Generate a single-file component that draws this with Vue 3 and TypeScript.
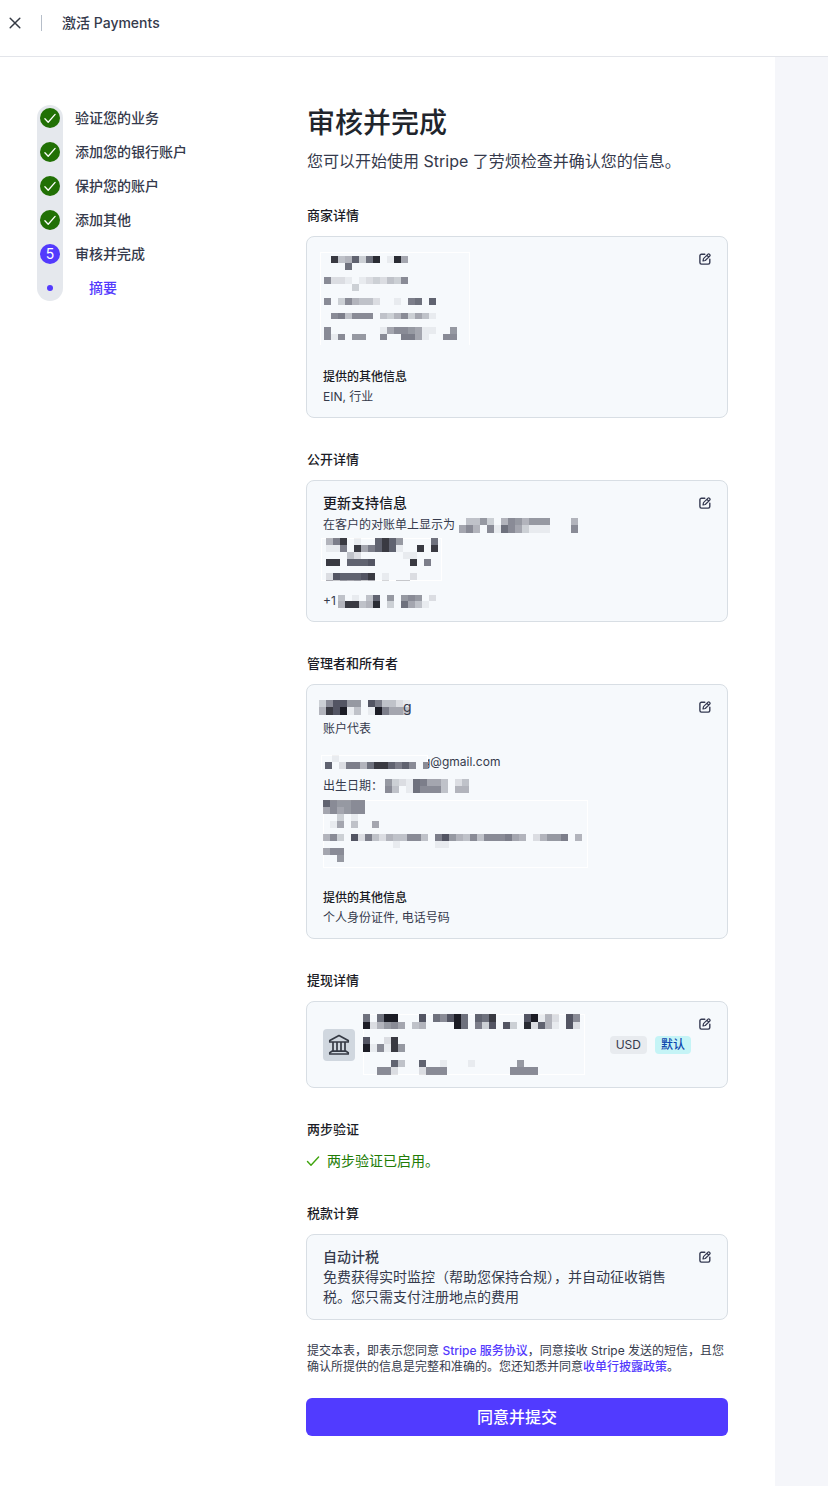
<script setup lang="ts">
import { h, type FunctionalComponent } from 'vue'

/** One strip of redaction tiles: top, height and a hex darkness per 7px tile ('.' is empty). */
type Strip = [number, number, string]

interface Redaction {
  width: number
  height: number
  inset: number
  frame?: 'box' | 'open'
  strips: Strip[]
}

const TILE = 7

const Mosaic: FunctionalComponent<{ data: Redaction }> = ({ data }) => {
  const tiles = data.strips.flatMap(([y, height, shades]) =>
    [...shades].flatMap((shade, i) =>
      shade === '.'
        ? []
        : [
            h('rect', {
              x: data.inset + i * TILE,
              y,
              width: TILE,
              height,
              fill: parseInt(shade, 16) > 12 ? '#0c0d16' : '#1c1e30',
              'fill-opacity': parseInt(shade, 16) / 16,
            }),
          ],
    ),
  )
  const { width: w, height: ht } = data
  const frame = data.frame
    ? h('path', {
        d:
          data.frame === 'box'
            ? `M.5 .5H${w - 0.5}V${ht - 0.5}H.5Z`
            : `M.5 ${ht}V.5H${w - 0.5}V${ht}`,
        fill: 'none',
        stroke: '#fff',
      })
    : null
  return h(
    'svg',
    { width: w, height: ht, viewBox: `0 0 ${w} ${ht}`, 'shape-rendering': 'crispEdges', 'aria-hidden': 'true' },
    [h('rect', { width: w, height: ht, fill: '#f6f9fc' }), frame, ...tiles],
  )
}
Mosaic.props = ['data']

const business: Redaction = {
  width: 150, height: 93, inset: 4, frame: 'open',
  strips: [
    [4, 7, '.d45b3ae.1e6'],
    [11, 7, '...a'],
    [25, 7, '8221.1232438'],
    [32, 7, '....3'],
    [46, 7, '8.3854420.1.9a.b'],
    [61, 6, '.894888.435836410'],
    [75, 7, '8.......16887611..7'],
    [82, 6, '818.77..8..9961..88'],
  ],
}
const statement: Redaction = {
  width: 120, height: 15, inset: 1,
  strips: [
    [0, 7, '.4473.5875777...5'],
    [7, 8, '685.81a863111...8'],
  ],
}
const support: Redaction = {
  width: 121, height: 43, inset: 5, frame: 'box',
  strips: [
    [0, 7, '59d.1..bdb7....a'],
    [7, 7, '119.d69bdb1..d.d'],
    [14, 7, '...42......11'],
    [21, 7, 'dd.bbbc.....d.9'],
    [35, 7, '2cbbbcd.1...2'],
    [42, 1, '6476746.3.44'],
  ],
}
const phone: Redaction = {
  width: 99, height: 13, inset: 0,
  strips: [
    [0, 6, '4.1.4b.7.787.2'],
    [6, 7, '5dd45e.3.a641'],
  ],
}
const owner: Redaction = {
  width: 92, height: 15, inset: 0,
  strips: [
    [0, 7, '38cc77.c94421'],
    [7, 8, '5dcf14.1f9664'],
  ],
}
const email: Redaction = {
  width: 107, height: 15, inset: 4, frame: 'open',
  strips: [
    [0, 7, '.1'],
    [7, 7, 'b.2995addb9b8.8'],
  ],
}
const birth: Redaction = {
  width: 89, height: 15, inset: 1,
  strips: [
    [0, 7, '7321a9664.24'],
    [7, 7, '84.1a8884.55'],
  ],
}
const address: Redaction = {
  width: 265, height: 68, inset: 0, frame: 'box',
  strips: [
    [0, 7, 'b87788'],
    [7, 7, '686788'],
    [14, 7, '..3.1'],
    [21, 7, '.16.4..6'],
    [34, 7, '583.c2942544884.9c75484888965.25779.5'],
    [41, 7, '..........1.....11'],
    [48, 7, '688'],
    [55, 7, '..7'],
  ],
}
const bank: Redaction = {
  width: 222, height: 61, inset: 0, frame: 'box',
  strips: [
    [0, 8, 'a.aff...c.a8cfa.bad....cf152.c8'],
    [8, 7, 'f25786.45....fa.93c.c3.e2b51.c2'],
    [23, 7, 'c..2d'],
    [30, 8, 'f181d7'],
    [46, 7, '....b4..b.01...1......7'],
    [53, 8, '..882...2888.........8888'],
  ],
}

const doneSteps: string[] = ['验证您的业务', '添加您的银行账户', '保护您的账户', '添加其他']

const EditIcon: FunctionalComponent = () =>
  h('svg', { width: 12, height: 12, viewBox: '0 0 12 12', fill: 'none', stroke: '#353a52', 'stroke-width': 1.4, 'aria-hidden': 'true' }, [
    h('path', { d: 'M5.8 1.2H2.4A1.5 1.5 0 0 0 .9 2.7v6.9a1.5 1.5 0 0 0 1.5 1.5h6.9a1.5 1.5 0 0 0 1.5-1.5V6.2', 'stroke-linecap': 'round' }),
    h('path', { d: 'M4 8l.5-2.3L9 1.2a1 1 0 0 1 1.4 0l.4.4a1 1 0 0 1 0 1.4L6.3 7.5 4 8ZM8 2.4l1.6 1.6', 'stroke-linejoin': 'round', 'stroke-width': 1.2 }),
  ])
</script>

<template>
  <div class="page">
    <header class="topbar">
      <button class="close" type="button" aria-label="关闭">
        <svg width="12" height="12" viewBox="0 0 12 12" aria-hidden="true">
          <path d="M1.2 1.2l9.6 9.6M10.8 1.2l-9.6 9.6" fill="none" stroke="#353a44" stroke-width="1.5" stroke-linecap="round" />
        </svg>
      </button>
      <span class="divider"></span>
      <span class="topbar-title">激活 Payments</span>
    </header>

    <div class="body">
      <nav class="sidebar">
        <ol class="steps">
          <li v-for="step in doneSteps" :key="step">
            <span class="dot done">
              <svg width="20" height="20" viewBox="0 0 20 20" aria-hidden="true">
                <path d="M4.9 10.8l3.3 3.4 6.9-7.8" fill="none" stroke="#fff" stroke-width="1.3" stroke-linecap="round" stroke-linejoin="round" />
              </svg>
            </span>
            <span>{{ step }}</span>
          </li>
          <li>
            <span class="dot current">5</span>
            <span>审核并完成</span>
          </li>
          <li class="sub">
            <span class="dot"><i class="bullet"></i></span>
            <span>摘要</span>
          </li>
        </ol>
      </nav>

      <main class="main">
        <h1>审核并完成</h1>
        <p class="lead">您可以开始使用 Stripe 了劳烦检查并确认您的信息。</p>

        <section>
          <h2>商家详情</h2>
          <div class="card compact">
            <div class="info">
              <Mosaic :data="business" class="business" />
              <h4>提供的其他信息</h4>
              <p>EIN, 行业</p>
            </div>
            <button class="edit" type="button" aria-label="编辑商家详情"><EditIcon /></button>
          </div>
        </section>

        <section>
          <h2>公开详情</h2>
          <div class="card compact">
            <div class="info">
              <h3 class="strong">更新支持信息</h3>
              <p class="line">在客户的对账单上显示为<Mosaic :data="statement" class="after" /></p>
              <Mosaic :data="support" class="support" />
              <p class="line phone">+1<Mosaic :data="phone" /></p>
            </div>
            <button class="edit" type="button" aria-label="编辑公开详情"><EditIcon /></button>
          </div>
        </section>

        <section>
          <h2>管理者和所有者</h2>
          <div class="card compact">
            <div class="info">
              <h3 class="line owner"><Mosaic :data="owner" /><span class="tail">g</span></h3>
              <p>账户代表</p>
              <p class="line email"><Mosaic :data="email" class="over" /><span class="tucked">g@gmail.com</span></p>
              <p class="line birth">出生日期：<Mosaic :data="birth" class="near" /></p>
              <Mosaic :data="address" class="address" />
              <h4>提供的其他信息</h4>
              <p>个人身份证件, 电话号码</p>
            </div>
            <button class="edit" type="button" aria-label="编辑管理者和所有者"><EditIcon /></button>
          </div>
        </section>

        <section>
          <h2>提现详情</h2>
          <div class="card payout">
            <div class="info account">
              <span class="bank-icon">
                <svg width="22" height="22" viewBox="0 0 22 22" fill="none" stroke="#353a44" stroke-width="1.7" stroke-linejoin="round" stroke-linecap="round" aria-hidden="true">
                  <path d="M1.8 8V6.6L11 1.6l9.2 5V8ZM1.8 20v-1.4l2.2-1.4h14l2.2 1.4V20ZM5 8v9.2M9 8v9.2M13 8v9.2M17 8v9.2" />
                </svg>
              </span>
              <Mosaic :data="bank" />
              <span class="badges">
                <span class="badge">USD</span>
                <span class="badge default">默认</span>
              </span>
            </div>
            <button class="edit" type="button" aria-label="编辑提现详情"><EditIcon /></button>
          </div>
        </section>

        <section>
          <h2>两步验证</h2>
          <p class="enabled">
            <svg width="14" height="14" viewBox="0 0 14 14" aria-hidden="true">
              <path d="M1.5 7.6l3.5 3.7 7.6-8.2" fill="none" stroke="#3fa40d" stroke-width="1.4" stroke-linecap="round" stroke-linejoin="round" />
            </svg>
            两步验证已启用。
          </p>
        </section>

        <section>
          <h2>税款计算</h2>
          <div class="card">
            <div class="info tax">
              <h3>自动计税</h3>
              <p>免费获得实时监控（帮助您保持合规），并自动征收销售税。您只需支付注册地点的费用</p>
            </div>
            <button class="edit" type="button" aria-label="编辑税款计算"><EditIcon /></button>
          </div>
        </section>

        <p class="legal">提交本表，即表示您同意 <a href="#terms">Stripe 服务协议</a>，同意接收 Stripe 发送的短信，且您确认所提供的信息是完整和准确的。您还知悉并同意<a href="#acquirer">收单行披露政策</a>。</p>
        <button class="submit" type="button">同意并提交</button>
      </main>
      <div class="rail"></div>
    </div>
  </div>
</template>

<style>
body {
  margin: 0;
  background: #fff;
}
</style>

<style scoped>
.page {
  min-height: 100vh;
  display: flex;
  flex-direction: column;
  color: #353a4c;
  font-family: Inter, "Noto Sans CJK SC", sans-serif;
  font-size: 12px;
  line-height: 20px;
}
.page * {
  box-sizing: border-box;
}
h1, h2, h3, h4, p, ol {
  margin: 0;
  padding: 0;
}
button {
  font: inherit;
  border: 0;
  padding: 0;
  background: none;
  cursor: pointer;
}
svg {
  display: block;
  flex: none;
}
.topbar {
  display: flex;
  align-items: center;
  padding: 11px 9px 21px;
  border-bottom: 1px solid #e3e5ea;
  line-height: 24px;
}
.divider {
  width: 1px;
  height: 16px;
  margin: 0 20px;
  background: #b6bec9;
}
.topbar-title {
  font-size: 14px;
  font-weight: 500;
}
.body {
  flex: 1;
  display: flex;
}
.sidebar {
  flex: none;
  width: 306px;
  padding: 48px 0 0 37px;
}
.steps {
  position: relative;
  list-style: none;
  display: flex;
  flex-direction: column;
  gap: 14px;
  padding: 3px;
  font-size: 14px;
  font-weight: 500;
}
.steps::before {
  content: "";
  position: absolute;
  top: 0;
  bottom: 0;
  left: 0;
  width: 26px;
  border-radius: 13px;
  background: #e5e8ed;
}
.steps li {
  position: relative;
  display: flex;
  align-items: center;
  gap: 15px;
}
.steps .sub {
  gap: 29px;
  color: #533afd;
}
.dot {
  width: 20px;
  height: 20px;
  border-radius: 50%;
  display: flex;
  align-items: center;
  justify-content: center;
}
.done {
  background: #217005;
}
.current {
  background: #533afd;
  color: #fff;
  font-weight: 400;
}
.bullet {
  width: 6px;
  height: 6px;
  border-radius: 50%;
  background: #533afd;
}
.main {
  flex: 1;
  min-width: 0;
  padding: 49px 47px 50px 0;
}
.rail {
  flex: none;
  width: 53px;
  background: #f5f6fa;
}
h1, h2, .lead, .legal {
  padding-left: 1px;
}
h1 {
  font-size: 28px;
  line-height: 34px;
  font-weight: 500;
  color: #21252c;
}
.lead {
  margin: 9px 0 32px;
  font-size: 16px;
  line-height: 24px;
}
section + section {
  margin-top: 31px;
}
h2 {
  margin-bottom: 11px;
  font-size: 13px;
  line-height: 20px;
  font-weight: 500;
  color: #1a1b25;
}
h3 {
  font-size: 14px;
  line-height: 20px;
  font-weight: 500;
}
h4 {
  font-size: 12px;
  line-height: 20px;
  font-weight: 500;
  color: #1a1b25;
}
.strong {
  margin-bottom: 2px;
  color: #1a1b25;
}
.card {
  display: flex;
  align-items: flex-start;
  gap: 24px;
  padding: 12px 16px;
  border: 1px solid #d8dee4;
  border-radius: 8px;
  background: #f6f9fc;
}
.compact {
  padding-bottom: 10px;
}
.info {
  flex: 1;
  min-width: 0;
}
.edit {
  margin-top: 4px;
}
.line {
  display: flex;
  align-items: center;
  height: 20px;
}
.business {
  margin: 3px 0 22px -3px;
}
.support {
  margin: 3px 0 10px -2px;
}
.after {
  margin-left: 3px;
}
.phone {
  gap: 2px;
}
.owner {
  margin-bottom: 2px;
}
.owner svg {
  margin-left: -4px;
}
.tail {
  margin-left: -8px;
  font-weight: 400;
}
.email {
  margin-top: 13px;
}
.over {
  position: relative;
  z-index: 1;
  margin-left: -2px;
}
.tucked {
  margin-left: -5px;
}
.birth {
  margin: 4px 0;
}
.near {
  margin-left: 1px;
}
.address {
  margin-bottom: 20px;
}
.payout {
  gap: 8px;
}
.account {
  display: flex;
  align-items: center;
  gap: 8px;
}
.bank-icon {
  flex: none;
  width: 32px;
  height: 32px;
  display: flex;
  align-items: center;
  justify-content: center;
  border-radius: 4px;
  background: #d0d7df;
}
.badges {
  display: flex;
  gap: 8px;
  margin-left: auto;
}
.badge {
  padding: 0 6px;
  border-radius: 4px;
  background: #e8ebef;
  line-height: 18px;
}
.default {
  background: #c5f4f6;
  color: #0b46ad;
  font-weight: 500;
}
.enabled {
  display: flex;
  align-items: center;
  gap: 7px;
  font-size: 14px;
  line-height: 22px;
  color: #217c05;
}
.tax p {
  font-size: 14px;
}
.legal {
  margin: 23px 0;
  line-height: 16px;
}
.legal a {
  color: #533afd;
  font-weight: 500;
  text-decoration: none;
}
.submit {
  width: 100%;
  height: 38px;
  border-radius: 6px;
  background: #513bff;
  color: #fff;
  font-size: 16px;
  font-weight: 500;
}
</style>
